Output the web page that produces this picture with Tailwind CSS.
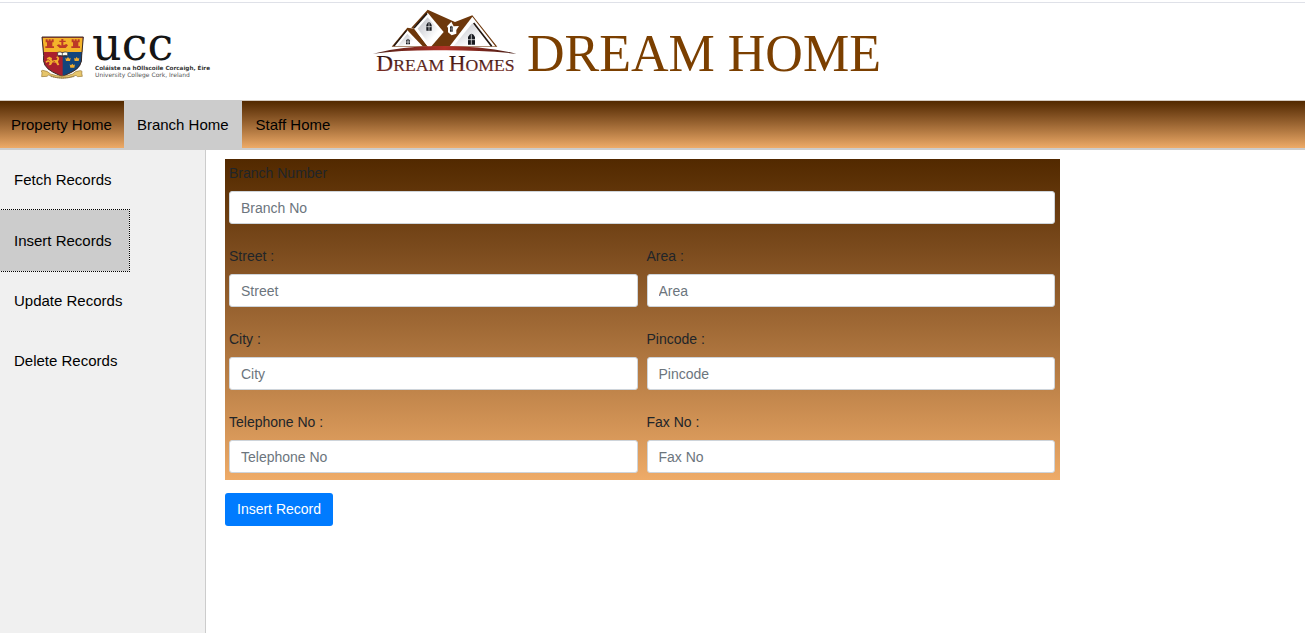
<!DOCTYPE html>
<html lang="en">
<head>
<meta charset="utf-8">
<meta name="viewport" content="width=device-width, initial-scale=1">
<title>Dream Home</title>
<script src="https://cdn.jsdelivr.net/npm/@tailwindcss/browser@4"></script>
</head>
<body class="flex min-h-screen flex-col bg-white font-['Liberation_Sans',Arial,sans-serif] text-black">
<header class="mt-[2px] flex h-[98px] items-start border-t border-[#dfe1e8]">
  <svg class="ml-[30px] mt-[22px] h-[65px] w-[200px] shrink-0 overflow-visible" viewBox="0 0 600 195" role="img" aria-label="UCC University College Cork, Ireland">
    <path d="M36 36H160L155 92Q158 126 126 141L97 155L68 141Q35 124 41 92Z" fill="#a91f2d"/>
    <path d="M38 38H158V81H41Z" fill="#f4b42b"/>
    <path d="M98 81H156V98Q155 125 130 139L98 154Z" fill="#12457c"/>
    <path d="M36 36H160L155 92Q158 126 126 141L97 155L68 141Q35 124 41 92Z" fill="none" stroke="#3c2c25" stroke-width="3"/>
    <g fill="#bd3927">
      <path d="M47 43h6v4h3v-4h6v4h3v-4h6v9h-4v12h5v5H46v-5h5V52h-4zM125 43h6v4h3v-4h6v4h3v-4h6v9h-4v12h5v5h-26v-5h5V52h-4z"/>
      <path d="M94 42h6v5h7v4h-7v10l9-4 5 4-7 8H89l-9-8 7-3 7 4V51h-6v-4h6z"/>
    </g>
    <g fill="#f2ad2e">
      <path d="M50 100l8-5 8 4-1 6h14q4-1 3-5l-4-3 4-3q8 5 4 11l-2 5 4 10-6 1-4-8-10-1-5 8-8 1 4-8-4-3-7 4-1-5 7-4z"/>
      <path d="M106 98l4 3 4-5 4 5 4-3-2 10h-12zM132 98l4 3 4-5 4 5 4-3-2 10h-12zM119 118l4 3 4-5 4 5 4-3-2 10h-12z"/>
    </g>
    <path d="M54 103l7 6m5-3l9 4m-17 6l-5 6" fill="none" stroke="#a62a24" stroke-width="2"/>
    <path d="M83 82q8-3 14 1 8-4 16-1v10q-8-2-16 1-7-3-14-1z" fill="#fffdf0" stroke="#2e2928" stroke-width="2"/>
    <path d="M97 83v10M85 94q12-3 26 1" fill="none" stroke="#2e2928" stroke-width="2"/>
    <path d="M38 136q-7 0-2 7l-1 12 16-1 5-4q40 19 82 1l5 4 14-1-2-10q4-7-5-7-14 0-22 10-31 13-66 0-10-10-24-11z" fill="#e6c56b" stroke="#957535" stroke-width="2"/>
    <path d="M62 154q34 10 72 0" fill="none" stroke="#86682f" stroke-width="3" stroke-dasharray="4 2"/>
    <text x="186" y="106" font-family="'DejaVu Serif',serif" font-size="138" fill="#151515">ucc</text>
    <text x="195" y="134" font-family="'DejaVu Sans',sans-serif" font-size="17" font-weight="700" fill="#333">Coláiste na hOllscoile Corcaigh, Éire</text>
    <text x="195" y="156" font-family="'DejaVu Sans',sans-serif" font-size="18" fill="#555">University College Cork, Ireland</text>
  </svg>
  <svg class="ml-[135px] h-[82px] w-[160px] shrink-0" viewBox="0 9 480 246" role="img" aria-label="Dream Homes">
    <defs>
      <linearGradient id="wall" x1="0" y1="0" x2="1" y2="1"><stop stop-color="#b9bbc3"/><stop offset=".7" stop-color="#fff"/></linearGradient>
      <linearGradient id="arc"><stop stop-color="#4a2018"/><stop offset=".5" stop-color="#b23025"/><stop offset="1" stop-color="#431c14"/></linearGradient>
      <linearGradient id="word" x1="0" y1="0" x2="0" y2="1"><stop offset=".2" stop-color="#31100d"/><stop offset="1" stop-color="#93342a"/></linearGradient>
    </defs>
    <path d="M188 29L270 66L322 46L397 140H200L148 87L139 83Z" fill="#6d370b"/>
    <path d="M127 83L148 86L189 140H80Z" fill="#6d370b"/>
    <path d="M188 38L236 96L200 138H187L148 87L146 82Z" fill="#fff"/>
    <path d="M188 52L228 97L195 136L158 86Z" fill="url(#wall)"/>
    <path d="M186 40L147 84" stroke="#21150f" stroke-width="5"/>
    <path d="M127 91L173 139H86Z" fill="#fff"/>
    <path d="M127 101L160 138H98Z" fill="url(#wall)"/>
    <path d="M125 91L87 138" stroke="#21150f" stroke-width="4"/>
    <path d="M322 50L391 139H254Z" fill="#fff"/>
    <path d="M322 70L374 138H266Z" fill="url(#wall)"/>
    <path d="M326 69L380 139" stroke="#21150f" stroke-width="5"/>
    <path d="M246 79L259 65L266 79L282 78L274 90V101L260 106L249 97V84Z" fill="#fff"/>
    <path d="M255 81q4-8 8 0v14h-8z" fill="#17191e"/><path d="M259 76v19M255 87h8" stroke="#fff" stroke-width="1"/>
    <path d="M184 92V75q8-18 16 0v17zM123 133v-11q6-12 12 0v11zM309 134v-23q11-19 21 0v23z" fill="#171a20"/>
    <path d="M192 67v25M184 80h16M129 117v16M123 126h12M319 103v31M309 119h21" stroke="#fff" stroke-width="2"/>
    <path d="M24 161Q110 138 220 138Q355 137 454 161Q345 150 225 151Q112 150 24 161Z" fill="url(#arc)"/>
    <text x="34" y="214" font-family="'Liberation Serif',serif" fill="url(#word)" stroke="#54231d" stroke-width=".5"><tspan font-size="70">D</tspan><tspan font-size="53">REAM </tspan><tspan font-size="70">H</tspan><tspan font-size="53">OMES</tspan></text>
  </svg>
  <h1 class="ml-[2px] mt-[21px] whitespace-nowrap font-['Liberation_Serif','Times_New_Roman',serif] text-[52px] leading-[60px] text-[#7b3f00]">DREAM HOME</h1>
</header>

<nav class="flex h-[50px] border-t border-b-2 border-t-[#d5cbc0] border-b-[#cccccc] bg-linear-to-b from-[#522900] to-[#eeab68] text-[15px]" aria-label="Main">
  <a href="#" class="flex items-center pt-[2px] pl-[11px] pr-3">Property Home</a>
  <a href="#" class="-mt-px flex items-center bg-[#cccccc] px-[13px] pt-[3px]" aria-current="page">Branch Home</a>
  <a href="#" class="flex items-center px-[14px] pt-[2px]">Staff Home</a>
</nav>

<div class="flex flex-1">
  <aside class="w-[206px] shrink-0 border-r border-[#cccccc] bg-[#f0f0f0]">
    <nav class="flex flex-col items-start text-[15px] leading-[60px]" aria-label="Records">
      <a href="#" class="px-[14px]">Fetch Records</a>
      <a href="#" class="bg-[#cccccc] pt-px pl-[14px] pr-[17px] outline-1 outline-dotted outline-black" aria-current="page">Insert Records</a>
      <a href="#" class="px-[14px]">Update Records</a>
      <a href="#" class="px-[14px]">Delete Records</a>
    </nav>
  </aside>
  <main class="flex-1 pl-[19px] pt-[9px] text-[14px]">
    <form class="w-full max-w-[835px]">
      <div class="grid grid-cols-2 gap-x-[9px] gap-y-[18px] bg-linear-to-b from-[#522900] to-[#eeab68] pr-[5px] pb-[7px] pl-1 text-[#212529]">
        <div class="col-span-2 flex flex-col gap-1">
          <label for="branch" class="leading-[28px]">Branch Number</label>
          <input id="branch" type="text" placeholder="Branch No" class="h-[33px] w-full rounded-[3px] border border-[#ced4da] bg-white px-[11px] placeholder:text-[#6c757d]">
        </div>
        <div class="flex flex-col gap-1">
          <label for="street" class="leading-[28px]">Street :</label>
          <input id="street" type="text" placeholder="Street" class="h-[33px] w-full rounded-[3px] border border-[#ced4da] bg-white px-[11px] placeholder:text-[#6c757d]">
        </div>
        <div class="flex flex-col gap-1">
          <label for="area" class="leading-[28px]">Area :</label>
          <input id="area" type="text" placeholder="Area" class="h-[33px] w-full rounded-[3px] border border-[#ced4da] bg-white px-[11px] placeholder:text-[#6c757d]">
        </div>
        <div class="flex flex-col gap-1">
          <label for="city" class="leading-[28px]">City :</label>
          <input id="city" type="text" placeholder="City" class="h-[33px] w-full rounded-[3px] border border-[#ced4da] bg-white px-[11px] placeholder:text-[#6c757d]">
        </div>
        <div class="flex flex-col gap-1">
          <label for="pincode" class="leading-[28px]">Pincode :</label>
          <input id="pincode" type="text" placeholder="Pincode" class="h-[33px] w-full rounded-[3px] border border-[#ced4da] bg-white px-[11px] placeholder:text-[#6c757d]">
        </div>
        <div class="flex flex-col gap-1">
          <label for="telephone" class="leading-[28px]">Telephone No :</label>
          <input id="telephone" type="text" placeholder="Telephone No" class="h-[33px] w-full rounded-[3px] border border-[#ced4da] bg-white px-[11px] placeholder:text-[#6c757d]">
        </div>
        <div class="flex flex-col gap-1">
          <label for="fax" class="leading-[28px]">Fax No :</label>
          <input id="fax" type="text" placeholder="Fax No" class="h-[33px] w-full rounded-[3px] border border-[#ced4da] bg-white px-[11px] placeholder:text-[#6c757d]">
        </div>
      </div>
      <button type="button" class="mt-[13px] h-[33px] rounded-[3px] bg-[#007bff] px-3 text-white">Insert Record</button>
    </form>
  </main>
</div>
</body>
</html>
